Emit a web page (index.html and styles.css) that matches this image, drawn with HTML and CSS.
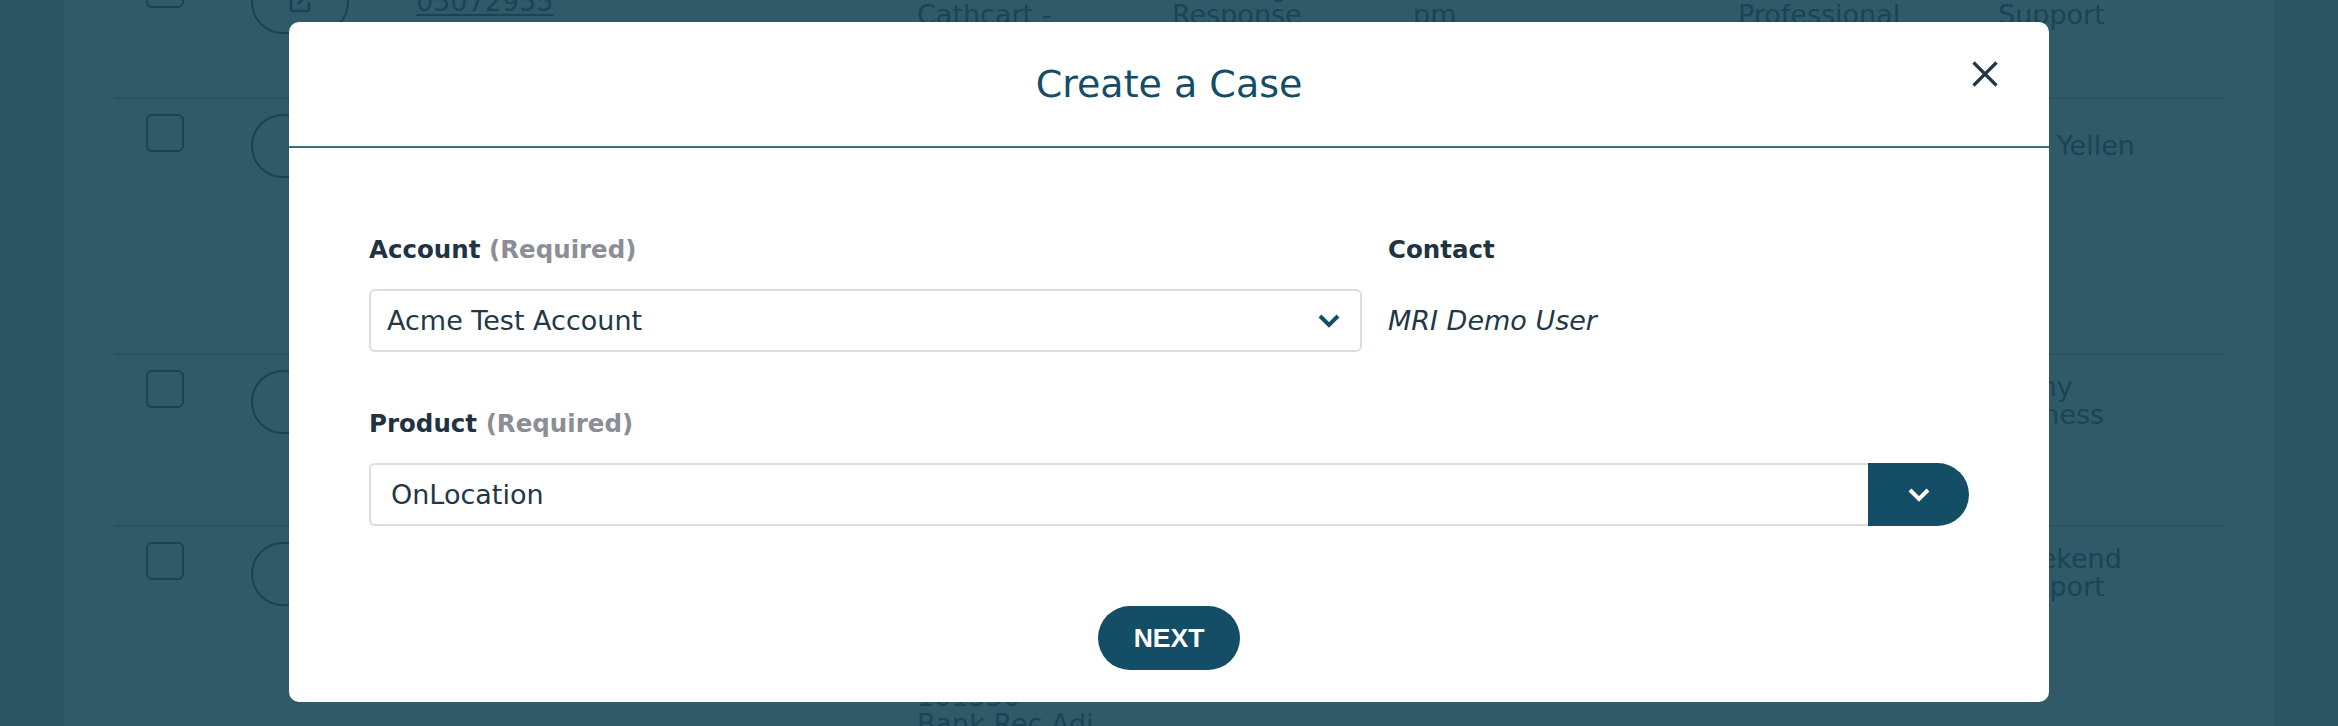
FILE: index.html
```html
<!DOCTYPE html>
<html lang="en">
<head>
  <meta charset="UTF-8" />
  <title>Create a Case</title>
  <link rel="stylesheet" href="styles.css">
</head>
<body>
  <div class="page">
    <div class="sheet">
      <div class="cases">
        <div class="case-row">
          <span class="check"></span>
          <span class="edit-btn">
            <svg width="24" height="24" viewBox="0 0 24 24"><path d="M11 3H5a2 2 0 0 0-2 2v14a2 2 0 0 0 2 2h14a2 2 0 0 0 2-2v-6" /><path d="M21 3L11 13" /></svg>
          </span>
          <div class="cell cell-mid"><a class="case-link">05072955</a></div>
          <div class="cell">Dana<br>Cathcart -</div>
          <div class="cell">Awaiting<br>Response</div>
          <div class="cell">03/14/2024 4:32<br>pm</div>
          <div class="cell">Premier<br>Professional</div>
          <div class="cell">Customer<br>Support</div>
        </div>
        <div class="case-row">
          <span class="check"></span>
          <span class="edit-btn">
            <svg width="24" height="24" viewBox="0 0 24 24"><path d="M11 3H5a2 2 0 0 0-2 2v14a2 2 0 0 0 2 2h14a2 2 0 0 0 2-2v-6" /><path d="M21 3L11 13" /></svg>
          </span>
          <div class="cell cell-mid"><a class="case-link">05072941</a></div>
          <div class="cell">Acme Test<br>Account</div>
          <div class="cell">New</div>
          <div class="cell">03/13/2024<br>11:05 am</div>
          <div class="cell">Standard</div>
          <div class="cell cell-mid">Jo E Yellen</div>
        </div>
        <div class="case-row">
          <span class="check"></span>
          <span class="edit-btn">
            <svg width="24" height="24" viewBox="0 0 24 24"><path d="M11 3H5a2 2 0 0 0-2 2v14a2 2 0 0 0 2 2h14a2 2 0 0 0 2-2v-6" /><path d="M21 3L11 13" /></svg>
          </span>
          <div class="cell cell-mid"></div>
          <div class="cell">OnLocation<br>Login</div>
          <div class="cell">In Progress</div>
          <div class="cell">03/12/2024<br>9:40 am</div>
          <div class="cell">Standard</div>
          <div class="cell">Jenny<br>Holness</div>
        </div>
        <div class="case-row">
          <span class="check"></span>
          <span class="edit-btn">
            <svg width="24" height="24" viewBox="0 0 24 24"><path d="M11 3H5a2 2 0 0 0-2 2v14a2 2 0 0 0 2 2h14a2 2 0 0 0 2-2v-6" /><path d="M21 3L11 13" /></svg>
          </span>
          <div class="cell cell-mid"><a class="case-link">05072918</a></div>
          <div class="cell">Month End<br>Close -<br>Journal<br>Entry<br>Batch<br>101350<br>Bank Rec Adj</div>
          <div class="cell">Closed</div>
          <div class="cell">03/11/2024<br>2:18 pm</div>
          <div class="cell">Premier<br>Professional</div>
          <div class="cell">Weekend<br>Support</div>
        </div>
      </div>
    </div>
  </div>

  <div class="backdrop">
    <div class="modal">
      <div class="modal-header">
        <span></span>
        <h2 class="modal-title">Create a Case</h2>
        <button class="close-btn" aria-label="Close">
          <svg width="26" height="26" viewBox="0 0 26 26"><path d="M1.5 1.5L24.5 24.5M24.5 1.5L1.5 24.5" /></svg>
        </button>
      </div>

      <div class="modal-body">
        <div class="form-grid">
          <div class="field">
            <label class="field-label">Account <span class="req">(Required)</span></label>
            <div class="select">
              <span>Acme Test Account</span>
              <svg class="chevron" width="22" height="14" viewBox="0 0 22 14"><path d="M2 2l9 9 9-9" /></svg>
            </div>
          </div>
          <div class="field">
            <label class="field-label">Contact</label>
            <div class="contact-value">MRI Demo User</div>
          </div>
          <div class="field field-wide">
            <label class="field-label">Product <span class="req">(Required)</span></label>
            <div class="combo">
              <div class="combo-input">OnLocation</div>
              <button class="combo-btn" aria-label="Show products">
                <svg width="22" height="14" viewBox="0 0 22 14"><path d="M2 2l9 9 9-9" /></svg>
              </button>
            </div>
          </div>
        </div>
        <div class="modal-footer">
          <button class="next-btn">NEXT</button>
        </div>
      </div>
    </div>
  </div>
</body>
</html>
```

FILE: styles.css
```css
body {
  margin: 0;
  height: 726px;
  overflow: hidden;
  font-family: "DejaVu Sans", sans-serif;
  background-color: #2c5462;
}

/* page behind the dialog, already dimmed */
.page {
  height: 726px;
  overflow: hidden;
}
.sheet {
  width: 2210px;
  height: 726px;
  margin: 0 auto;
  padding: 0 51px 0 50px;
  box-sizing: border-box;
  background-color: #305a68;
  overflow: hidden;
}
.cases {
  display: grid;
  grid-template-rows: 144px 256px 172px 260px;
  margin-top: -45px;
}
.case-row {
  display: grid;
  grid-template-columns: 105px 165px 501px 255px 241px 325px 260px 1fr;
  align-items: start;
  padding: 15px 0 0 32px;
  border-bottom: 2px solid #2a5260;
  color: #1a4459;
  font-size: 27px;
  line-height: 27.5px;
}
.check {
  width: 38px;
  height: 38px;
  box-sizing: border-box;
  border: 2px solid #18435a;
  border-radius: 6px;
}
.edit-btn {
  width: 98px;
  height: 64px;
  box-sizing: border-box;
  border: 2px solid #18435a;
  border-radius: 32px;
  display: flex;
  align-items: center;
  justify-content: center;
}
.edit-btn svg {
  fill: none;
  stroke: #18435a;
  stroke-width: 2.5;
  stroke-linecap: round;
  stroke-linejoin: round;
}
.cell {
  padding-top: 3px;
  white-space: nowrap;
}
.cell-mid {
  padding-top: 0;
  line-height: 64px;
}
.case-link {
  color: #1a4459;
  text-decoration: underline;
  text-decoration-thickness: 2px;
  text-underline-offset: 3px;
}

/* dialog */
.backdrop {
  position: fixed;
  inset: 0;
  display: flex;
  justify-content: center;
  align-items: flex-start;
  padding-top: 22px;
}
.modal {
  width: 1760px;
  background-color: #fff;
  border-radius: 10px;
}
.modal-header {
  display: grid;
  grid-template-columns: 1fr auto 1fr;
  align-items: start;
  padding: 40px 51px;
  border-bottom: 2px solid #3b6f7e;
}
.modal-title {
  margin: 0;
  font-size: 38px;
  font-weight: normal;
  line-height: 44px;
  color: #134d66;
}
.close-btn {
  justify-self: end;
  margin-top: -1px;
  padding: 0;
  border: none;
  background: none;
  display: flex;
}
.close-btn svg {
  stroke: #253746;
  stroke-width: 3.2;
}
.modal-body {
  padding: 86px 80px 32px;
}
.form-grid {
  display: grid;
  grid-template-columns: 993px 1fr;
  column-gap: 26px;
  row-gap: 56px;
}
.field-wide {
  grid-column: 1 / -1;
}
.field-label {
  display: block;
  margin-bottom: 23px;
  font-size: 24.5px;
  font-weight: bold;
  line-height: 32px;
  color: #213343;
}
.req {
  color: #8b8e94;
}
.select,
.combo-input,
.contact-value {
  height: 63px;
  box-sizing: border-box;
  display: flex;
  align-items: center;
  font-size: 27px;
  color: #243746;
}
.select {
  justify-content: space-between;
  padding: 0 20px 0 16px;
  border: 2px solid #d9dee1;
  border-radius: 6px;
}
.chevron {
  fill: none;
  stroke: #134d66;
  stroke-width: 4;
}
.contact-value {
  font-style: italic;
}
.combo {
  display: flex;
}
.combo-input {
  flex: 1;
  padding-left: 20px;
  border: 2px solid #d9dee1;
  border-right: none;
  border-radius: 6px 0 0 6px;
}
.combo-btn {
  width: 101px;
  height: 63px;
  padding: 0;
  border: none;
  border-radius: 0 32px 32px 0;
  background-color: #134d66;
  display: flex;
  align-items: center;
  justify-content: center;
}
.combo-btn svg {
  fill: none;
  stroke: #fff;
  stroke-width: 4;
}
.modal-footer {
  display: flex;
  justify-content: center;
  margin-top: 80px;
}
.next-btn {
  width: 142px;
  height: 64px;
  border: none;
  border-radius: 32px;
  background-color: #134d66;
  color: #fff;
  font-family: "Liberation Sans", Arial, sans-serif;
  font-size: 26.5px;
  font-weight: bold;
}
```
